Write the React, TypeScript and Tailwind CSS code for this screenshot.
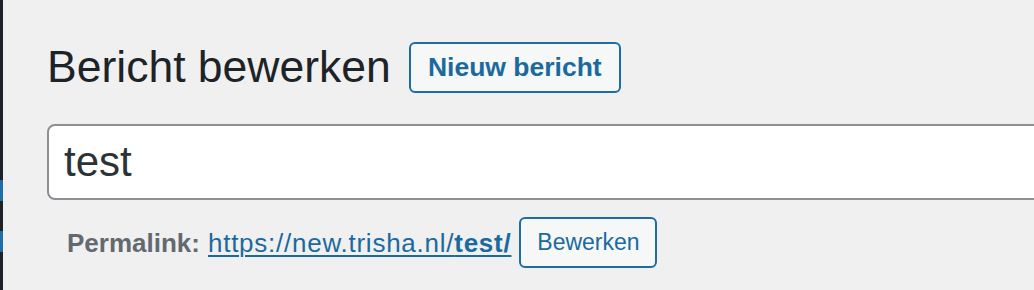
import React from "react";

export default function App() {
  return (
    <div
      className="w-[1034px] h-[290px] overflow-hidden flex bg-[#f0f0f1]"
      style={{ fontFamily: '"Liberation Sans", Arial, sans-serif' }}
    >
      <div className="w-[3px] h-full bg-[#1d2327] flex flex-col shrink-0">
        <div className="h-[180px]" />
        <div className="h-[21px] bg-[#1e6fa8]" />
        <div className="h-[30px]" />
        <div className="h-[21px] bg-[#1e6fa8]" />
      </div>
      <div className="flex-1 min-w-0 pl-[44px] pt-[42px] flex flex-col">
        <div className="flex items-center h-[51px]">
          <h1 className="text-[44.5px] leading-none text-[#1d2327] font-normal">
            Bericht bewerken
          </h1>
          <button className="ml-[18px] w-[212px] h-[51px] border-2 border-[#1f6ca3] rounded-[6px] bg-[#f6f7f7] text-[#1b6a9e] text-[26.5px] font-bold leading-none flex items-center justify-center">
            Nieuw bericht
          </button>
        </div>
        <div className="mt-[31px] w-[1100px] h-[76px] shrink-0 border-2 border-[#8c8f94] rounded-[8px] bg-white flex items-center pl-[15px]">
          <span className="text-[42px] leading-none text-[#2c3338]">test</span>
        </div>
        <div className="mt-[17px] pl-[20px] flex items-center h-[51px]">
          <span className="text-[26px] font-bold text-[#646970] leading-none">
            Permalink:
          </span>
          <a
            href="#"
            className="ml-[8px] text-[26px] leading-none text-[#1b6a9e] underline decoration-[1.5px] underline-offset-[3px] tracking-[0.75px]"
          >
            https://new.trisha.nl/<span className="font-bold">test/</span>
          </a>
          <button className="ml-[8px] w-[138px] h-[51px] border-2 border-[#1f6ca3] rounded-[6px] bg-[#f6f7f7] text-[#1b6a9e] text-[23px] leading-none flex items-center justify-center">
            Bewerken
          </button>
        </div>
      </div>
    </div>
  );
}
